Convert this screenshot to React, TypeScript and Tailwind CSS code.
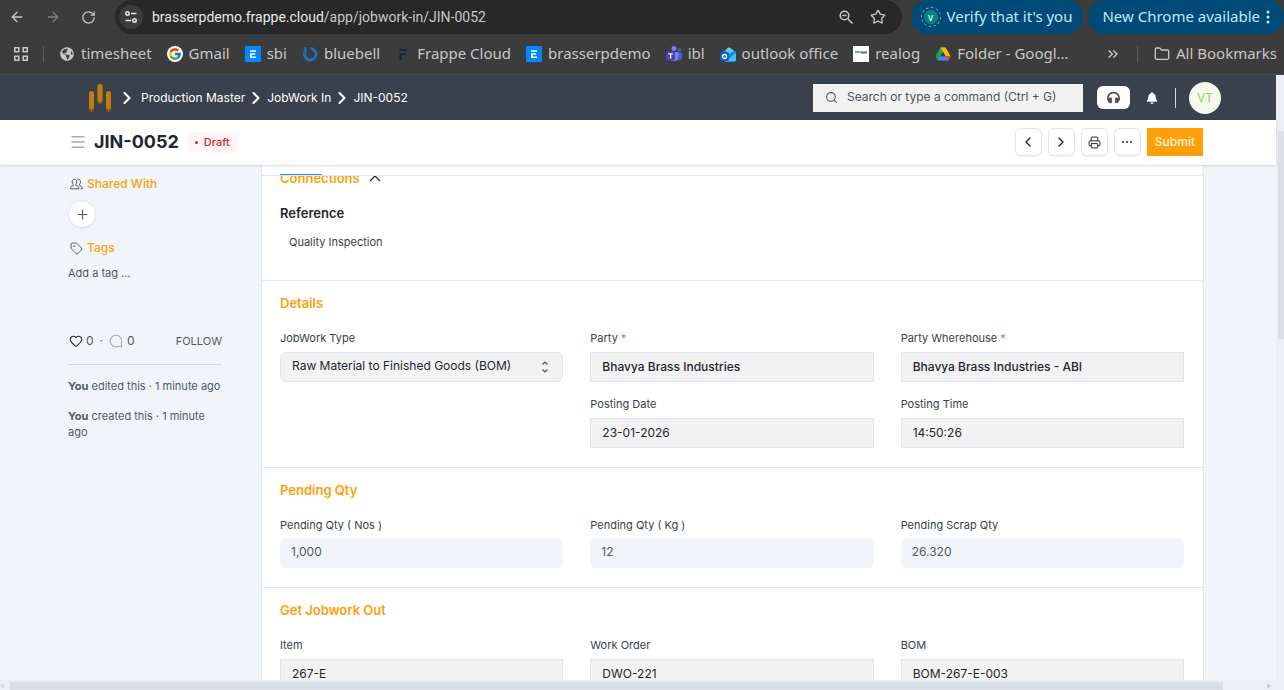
import type { ReactNode } from 'react';
import {
  ArrowLeft,
  ArrowRight,
  ChevronLeft,
  ChevronRight,
  ChevronsRight,
  Folder,
  Heart,
  Menu,
  MessageCircle,
  Plus,
  Printer,
  RotateCw,
  Search,
  Star,
  Tag,
} from 'lucide-react';
import { FcGoogle } from 'react-icons/fc';
import { FaBell, FaGlobeAmericas, FaHeadphones } from 'react-icons/fa';

type FieldItem = { id: string; label: string; value: string; required?: boolean; strong?: boolean };

const PARTY_FIELDS: FieldItem[] = [
  { id: 'party', label: 'Party', value: 'Bhavya Brass Industries', required: true, strong: true },
  { id: 'warehouse', label: 'Party Wherehouse', value: 'Bhavya Brass Industries - ABI', required: true, strong: true },
];

const PENDING_FIELDS: FieldItem[] = [
  { id: 'pending-nos', label: 'Pending Qty ( Nos )', value: '1,000' },
  { id: 'pending-kg', label: 'Pending Qty ( Kg )', value: '12' },
  { id: 'pending-scrap', label: 'Pending Scrap Qty', value: '26.320' },
];

const JOBWORK_FIELDS: FieldItem[] = [
  { id: 'item', label: 'Item', value: '267-E' },
  { id: 'work-order', label: 'Work Order', value: 'DWO-221' },
  { id: 'bom', label: 'BOM', value: 'BOM-267-E-003' },
];

function ErpIcon() {
  return (
    <svg viewBox="0 0 16 16" className="h-4 w-4">
      <rect width="16" height="16" rx="1" fill="#0089ff" />
      <path d="M5 4.2h6v1.6H5zM5 7.2h5.2v1.6H6.8v1.6H11V12H5z" fill="#fff" />
    </svg>
  );
}

function BluebellIcon() {
  return (
    <svg viewBox="0 0 16 16" className="h-4 w-4" fill="none" stroke="#1c6fb8" strokeWidth="3">
      <path d="M8.5 2.4A5.8 5.8 0 1 1 3.4 5" />
      <path d="M3.5 1v5" strokeWidth="2.2" />
    </svg>
  );
}

function FrappeIcon() {
  return (
    <svg viewBox="0 0 16 16" className="h-4 w-4" fill="#17293f">
      <path d="M4.5 3H12v2H4.5zM4.5 7H11v2H7v5H4.5z" />
    </svg>
  );
}

function TeamsIcon() {
  return (
    <svg viewBox="0 0 16 16" className="h-4 w-4">
      <circle cx="8" cy="2.6" r="2.5" fill="#7b83eb" />
      <circle cx="13.4" cy="4" r="1.8" fill="#5059c9" />
      <path d="M10 6.5h6v5a3 3 0 0 1-5 2z" fill="#5059c9" />
      <path d="M4 6h8.5v5.5a4.3 4.3 0 0 1-8.5 0z" fill="#7b83eb" />
      <rect y="5.5" width="9" height="9" rx="1" fill="#4b41b8" />
      <path d="M2.4 7.3h4.4v1.3H5.3v4H3.9v-4H2.4z" fill="#fff" />
    </svg>
  );
}

function OutlookIcon() {
  return (
    <svg viewBox="0 0 16 16" className="h-4 w-4">
      <path d="M2 6 9 1.2 16 6v7.5a2 2 0 0 1-2 2H5z" fill="#1788e5" />
      <path d="M6 3.4 9 1.2 14 5 7 9z" fill="#72c7f5" />
      <path d="M5 15.5 16 7v6.5a2 2 0 0 1-2 2z" fill="#37c4f5" />
      <rect y="6" width="9" height="9" rx="2" fill="#0f5fc9" />
      <circle cx="4.5" cy="10.5" r="2" fill="none" stroke="#fff" strokeWidth="1.3" />
    </svg>
  );
}

function DriveIcon() {
  return (
    <svg viewBox="0 0 16 16" className="h-4 w-4">
      <path d="M5.4 1.5h5.2L5 11.2l-2.4 3.3L.5 10.3z" fill="#1ea362" />
      <path d="M5.4 1.5h5.2l5 8.8h-5z" fill="#ffba00" />
      <path d="M5.2 10.3h10.4L13.2 14.5H2.6z" fill="#4285f4" />
      <path d="M10.6 10.3h5L13.2 14.5z" fill="#ea4335" />
      <path d="M8 6.2 10.4 10.3H5.6z" fill="#3c3c3c" />
    </svg>
  );
}

function RealogIcon() {
  return (
    <svg viewBox="0 0 16 16" className="h-4 w-4">
      <path d="M0 0h16v16H0z" fill="#fff" />
      <path d="M2 5h5v2H2z" fill="#6fa8d6" />
      <path d="M7.5 5.5H14v2H7.5z" fill="#5b6f86" />
    </svg>
  );
}

function TuneIcon() {
  return (
    <svg viewBox="0 0 16 16" className="h-4 w-4" fill="none" stroke="#e3e3e3" strokeWidth="1.6">
      <circle cx="4.5" cy="4.5" r="1.7" />
      <path d="M8 4.5h5.5M2.5 11.5H8" />
      <circle cx="11.5" cy="11.5" r="1.7" />
    </svg>
  );
}

function ZoomOutIcon() {
  return (
    <svg viewBox="0 0 16 16" className="h-4 w-4" fill="none" stroke="currentColor" strokeWidth="1.6">
      <circle cx="6.5" cy="6.5" r="4.3" />
      <path d="m9.8 9.8 4.7 4.7M4.5 6.5h4" />
    </svg>
  );
}

function AppsIcon() {
  return (
    <svg viewBox="0 0 14 14" className="h-[14px] w-[14px]" fill="none" stroke="#c7c7c7" strokeWidth="1.6">
      <path d="M.8.8h4v4h-4zM9.2.8h4v4h-4zM.8 9.2h4v4h-4zM9.2 9.2h4v4h-4z" />
    </svg>
  );
}

function BrandLogo() {
  return (
    <svg viewBox="0 0 24 30" className="h-[30px] w-6" strokeWidth="5" strokeLinecap="round">
      <path d="M3.5 10.5v16M12 3.5v15M20.5 10.5v16" stroke="#8a5208" />
      <path d="M3.5 10.5v13.5M12 3.5v13M20.5 10.5v13.5" stroke="#c27c0e" />
    </svg>
  );
}

function SharedIcon() {
  return (
    <svg viewBox="0 0 13 12" className="h-3 w-[13px]" fill="none" stroke="#505a62" strokeLinejoin="round">
      <path d="M4.5 1.2c1.5 0 2.3 1 2.3 2.5 0 1.2-.5 2-.9 2.5v1.300l2.300 1c.5.3.6 1 .6 2.300H.6c0-1.300.1-2 .6-2.300l2-1V6.200c-.5-.5-1-1.300-1-2.500 0-1.500.8-2.500 2.300-2.500z" />
      <path d="M7.3 1.3C9.2.8 10.5 2 10.5 3.7c0 1.2-.5 2-.9 2.5v1.300l2 1c.6.3.8 1 .8 2.300h-1.800" />
    </svg>
  );
}

const BOOKMARKS: { label: string; icon: ReactNode }[] = [
  { label: 'timesheet', icon: <FaGlobeAmericas className="h-[14px] w-4 text-[#c7c7c7]" /> },
  { label: 'Gmail', icon: <span className="rounded-full bg-white p-px"><FcGoogle className="h-[14px] w-[14px]" /></span> },
  { label: 'sbi', icon: <ErpIcon /> },
  { label: 'bluebell', icon: <BluebellIcon /> },
  { label: 'Frappe Cloud', icon: <FrappeIcon /> },
  { label: 'brasserpdemo', icon: <ErpIcon /> },
  { label: 'ibl', icon: <TeamsIcon /> },
  { label: 'outlook office', icon: <OutlookIcon /> },
  { label: 'realog', icon: <RealogIcon /> },
  { label: 'Folder - Googl…', icon: <DriveIcon /> },
];

function BrowserBar() {
  return (
    <header className="shrink-0 border-b border-[#4a4a4a] bg-[#3c3c3c] font-['Noto_Sans',sans-serif] text-[15px] text-[#c7c7c7]">
      <div className="flex h-[34px] items-center">
        <div className="flex w-[115px] shrink-0 items-center gap-5 pl-[9px]">
          <button aria-label="Back"><ArrowLeft className="h-4 w-4" /></button>
          <button aria-label="Forward" className="text-[#7d7d7d]"><ArrowRight className="h-4 w-4" /></button>
          <button aria-label="Reload"><RotateCw className="h-[15px] w-[15px]" /></button>
        </div>
        <div className="flex h-[34px] min-w-0 flex-1 items-center rounded-full bg-[#282828] pl-1 pr-4">
          <button aria-label="Site information" className="grid h-6 w-6 shrink-0 place-items-center rounded-full bg-[#3c3c3c]"><TuneIcon /></button>
          <p className="ml-[9px] min-w-0 flex-1 truncate font-['Roboto',sans-serif] text-sm"><span className="text-[#e8e8e8]">brasserpdemo.frappe.cloud</span>/app/jobwork-in/JIN-0052</p>
          <button aria-label="Zoom" className="mr-4"><ZoomOutIcon /></button>
          <button aria-label="Bookmark this tab"><Star className="h-4 w-4" /></button>
        </div>
        <button className="ml-[9px] flex h-[34px] shrink-0 items-center gap-[6px] rounded-full bg-[#004a77] pb-px pl-[10px] pr-[11px] text-[#c2e7ff]">
          <span className="grid h-5 w-5 place-items-center rounded-full border border-dashed border-[#8aa9bd]">
            <span className="grid h-[14px] w-[14px] place-items-center rounded-full bg-[#00897b] text-[10px] leading-none text-white">v</span>
          </span>
          Verify that it's you
        </button>
        <button className="ml-[5px] flex h-[34px] shrink-0 items-center gap-[6px] rounded-full bg-[#004a77] pb-px pl-[14px] pr-[14px] text-[#c2e7ff]">
          New Chrome available
          <svg viewBox="0 0 4 16" className="h-4 w-1" fill="currentColor">
            <circle cx="2" cy="3" r="1.5" /><circle cx="2" cy="8" r="1.5" /><circle cx="2" cy="13" r="1.5" />
          </svg>
        </button>
      </div>
      <nav className="flex h-10 items-center whitespace-nowrap pb-px pl-[14px] pr-[7px]">
        <button aria-label="Apps"><AppsIcon /></button>
        <span className="mx-[15px] h-4 w-px bg-[#5c5c5c]" />
        <div className="flex min-w-0 items-center gap-[15px] overflow-hidden">
          {BOOKMARKS.map((item) => (
            <a key={item.label} href="#" className="flex shrink-0 items-center gap-[6px]">{item.icon}{item.label}</a>
          ))}
        </div>
        <button aria-label="More bookmarks" className="ml-auto"><ChevronsRight className="h-4 w-4" /></button>
        <span className="mx-4 h-4 w-px bg-[#5c5c5c]" />
        <button className="flex items-center gap-[6px]"><Folder className="h-4 w-4" />All Bookmarks</button>
      </nav>
    </header>
  );
}

function Navbar() {
  return (
    <div className="flex h-[45px] shrink-0 items-center bg-[#38414c] pl-[88px] pr-[55px] text-white">
      <a href="#" aria-label="Home"><BrandLogo /></a>
      <nav className="flex items-center text-xs">
        <ChevronRight className="ml-[5px] mr-1 h-5 w-5" strokeWidth={2.5} />
        <a href="#">Production Master</a>
        <ChevronRight className="mx-px h-5 w-5" strokeWidth={2.5} />
        <a href="#">JobWork In</a>
        <ChevronRight className="mx-px h-5 w-5" strokeWidth={2.5} />
        <a href="#">JIN-0052</a>
      </nav>
      <label className="ml-auto flex h-7 w-[270px] items-center gap-[9px] bg-[#f2f2f2] pl-3 text-[#4c5561]">
        <Search className="h-[13px] w-[13px]" />
        <input aria-label="Search" placeholder="Search or type a command (Ctrl + G)" className="min-w-0 flex-1 pb-[2px] text-xs outline-none placeholder:text-[#4c5561]" />
      </label>
      <button aria-label="Support" className="ml-[14px] grid h-[23px] w-[33px] place-items-center rounded-md bg-white text-[#505050]"><FaHeadphones className="h-[13px] w-[13px]" /></button>
      <button aria-label="Notifications" className="ml-4"><FaBell className="h-3 w-3" /></button>
      <span className="ml-[17px] h-5 w-px bg-[#d3d8de]" />
      <button className="ml-[13px] grid h-8 w-8 place-items-center rounded-full bg-[#f4faee] text-xs text-[#93d65c]">VT</button>
    </div>
  );
}

function ToolButton({ label, children }: { label: string; children: ReactNode }) {
  return (
    <button aria-label={label} className="grid h-7 w-[27px] place-items-center rounded-md border border-[#e2e4e8] bg-white shadow-xs">{children}</button>
  );
}

function PageHead() {
  return (
    <div className="z-10 flex h-[45px] shrink-0 items-center bg-white pb-px pl-[69px] pr-[73px] text-[#1f272e] shadow-sm">
      <button aria-label="Toggle sidebar" className="text-[#a3abb5]"><Menu className="h-[18px] w-[18px]" /></button>
      <h1 className="ml-[7px] text-lg font-bold">JIN-0052</h1>
      <span className="ml-2 flex h-[21px] items-center gap-[6px] rounded-md bg-[#fff5f5] px-2 text-[11px] font-medium text-[#cb2929]">
        <span className="h-[3px] w-[3px] rounded-full bg-current" />
        Draft
      </span>
      <div className="ml-auto flex items-center gap-[6px]">
        <ToolButton label="Previous"><ChevronLeft className="h-4 w-4" /></ToolButton>
        <ToolButton label="Next"><ChevronRight className="h-4 w-4" /></ToolButton>
        <ToolButton label="Print"><Printer className="h-[13px] w-[13px]" strokeWidth={1.8} /></ToolButton>
        <ToolButton label="Menu">
          <svg viewBox="0 0 12 4" className="h-1 w-3" fill="currentColor">
            <circle cx="2" cy="2" r="1" /><circle cx="6" cy="2" r="1" /><circle cx="10" cy="2" r="1" />
          </svg>
        </ToolButton>
        <button className="h-7 bg-[#ffa00a] px-2 text-xs font-medium text-[#fff3dc]">Submit</button>
      </div>
    </div>
  );
}

function Sidebar() {
  return (
    <aside className="mr-[39px] w-[154px] shrink-0 pt-[11px] text-[11px] leading-4 text-[#505a62]">
      <h2 className="flex items-center gap-1 pl-[2px] text-xs leading-4 font-medium text-[#ffa00a]">
        <SharedIcon />Shared With
      </h2>
      <button aria-label="Share" className="mt-2 grid h-7 w-7 place-items-center rounded-full border border-[#e2e6e9] bg-white shadow-xs"><Plus className="h-[15px] w-[15px]" strokeWidth={1.8} /></button>
      <h2 className="mt-3 flex items-center gap-1 pl-[2px] text-xs leading-4 font-medium text-[#ffa00a]">
        <Tag className="h-[13px] w-[13px] text-[#505a62]" strokeWidth={1.8} />Tags
      </h2>
      <button className="mt-[9px] block">Add a tag ...</button>
      <div className="mt-[52px] flex items-center pl-px text-xs leading-4">
        <button className="flex items-center gap-[3px]"><Heart className="h-[14px] w-[14px] text-[#1f272e]" strokeWidth={1.8} />0</button>
        <span className="mx-[6px]">·</span>
        <button className="flex items-center gap-1"><MessageCircle className="h-[14px] w-[14px] -scale-x-100 text-[#a3abb5]" strokeWidth={1.8} />0</button>
        <button className="ml-auto text-[11px]">FOLLOW</button>
      </div>
      <p className="mt-[15px] border-t border-[#d3d9e0] pt-[13px]"><b>You</b> edited this · 1 minute ago</p>
      <p className="mt-[14px]"><b>You</b> created this · 1 minute ago</p>
    </aside>
  );
}

function Field({ field }: { field: FieldItem }) {
  return (
    <div>
      <label htmlFor={field.id} className="block text-[11px] leading-4">
        {field.label}{field.required && <span className="text-[#ff5858]"> *</span>}
      </label>
      <input
        id={field.id}
        defaultValue={field.value}
        className={`mt-[6px] block h-[30px] w-full border border-[#e2e6f0] bg-[#f2f2f2] px-[11px] pb-[2px] text-xs text-[#1f272e] outline-none ${field.strong ? 'font-medium' : ''}`}
      />
    </div>
  );
}

function ReadOnlyField({ field }: { field: FieldItem }) {
  return (
    <div>
      <label htmlFor={field.id} className="block text-[11px] leading-4">{field.label}</label>
      <input id={field.id} value={field.value} readOnly className="mt-[5px] block h-[30px] w-full rounded-md bg-[#f1f5fa] px-[11px] pb-[3px] text-xs text-[#505a62] outline-none" />
    </div>
  );
}

function Section({ title, children }: { title: string; children: ReactNode }) {
  return (
    <section className="border-t border-[#e2e6f0] pl-[18px] pr-[19px] pt-[14px] pb-[19px]">
      <h2 className="mb-[19px] text-[13px] font-semibold leading-4 text-[#ffa00a]">{title}</h2>
      <div className="grid grid-cols-3 gap-x-[27px] gap-y-[14px]">{children}</div>
    </section>
  );
}

function JobWorkForm() {
  return (
    <main className="min-w-0 flex-1 border-x border-[#e2e6f0] bg-white text-[#38414c]">
      <div className="flex h-[11px] items-end border-b border-[#e2e6f0] pl-[18px]"><span className="h-px w-[42px] bg-[#2490ef]" /></div>
      <section className="h-[104px] pl-[18px]">
        <button className="flex h-[10px] items-end gap-[9px] overflow-hidden text-[13px] font-semibold leading-4 text-[#ffa00a]">
          Connections
          <svg viewBox="0 0 12 16" className="h-4 w-3" fill="none" stroke="#1f272e" strokeWidth="1.2">
            <path d="m1 11 5-5 5 5" />
          </svg>
        </button>
        <h3 className="mt-[19px] text-[13px] font-semibold leading-4 text-[#1f272e]">Reference</h3>
        <a href="#" className="ml-[9px] mt-[13px] inline-block text-[11px] leading-4">Quality Inspection</a>
      </section>
      <Section title="Details">
        <div>
          <label htmlFor="jobwork-type" className="block text-[11px] leading-4">JobWork Type</label>
          <div className="relative mt-[6px]">
            <select id="jobwork-type" className="block h-[30px] w-full appearance-none rounded-md border border-[#e2e6f0] bg-[#f2f2f2] px-[11px] pb-[2px] text-xs text-[#1f272e] outline-none">
              <option>Raw Material to Finished Goods (BOM)</option>
            </select>
            <svg viewBox="0 0 8 12" className="pointer-events-none absolute right-[14px] top-[9px] h-3 w-2" fill="none" stroke="#4c5561" strokeWidth="1.2">
              <path d="m1.5 3.5 2.5-2.5 2.5 2.5M1.5 8.5 4 11l2.5-2.5" />
            </svg>
          </div>
        </div>
        {PARTY_FIELDS.map((field) => <Field key={field.id} field={field} />)}
        <div className="col-start-2"><Field field={{ id: 'posting-date', label: 'Posting Date', value: '23-01-2026' }} /></div>
        <Field field={{ id: 'posting-time', label: 'Posting Time', value: '14:50:26' }} />
      </Section>
      <Section title="Pending Qty">
        {PENDING_FIELDS.map((field) => <ReadOnlyField key={field.id} field={field} />)}
      </Section>
      <Section title="Get Jobwork Out">
        {JOBWORK_FIELDS.map((field) => <Field key={field.id} field={field} />)}
      </Section>
    </main>
  );
}

export default function App() {
  return (
    <div className="flex h-screen flex-col overflow-hidden bg-[#f1f5fa] font-['Inter',sans-serif]">
      <BrowserBar />
      <div className="flex min-h-0 flex-1">
        <div className="flex min-w-0 flex-1 flex-col">
          <Navbar />
          <PageHead />
          <div className="flex min-h-0 flex-1 overflow-hidden pl-[68px] pr-[72px]">
            <Sidebar />
            <JobWorkForm />
          </div>
        </div>
        <div className="flex w-2 shrink-0 flex-col items-end bg-[#ebeff5] pt-[56px]">
          <div className="h-[208px] w-[6px] bg-[#d8dfe6]" />
        </div>
      </div>
      <div className="flex h-[10px] shrink-0 items-end justify-between bg-[#ebeff5] pr-[13px]">
        <svg viewBox="0 0 4 8" className="h-2 w-1" fill="#d0d7df"><path d="M4 1v6L0 4z" /></svg>
        <div className="ml-[6px] mr-[44px] h-2 flex-1 bg-[#d8dfe6]" />
        <svg viewBox="0 0 4 8" className="h-2 w-1" fill="#c8d0d9"><path d="M0 1v6l4-3z" /></svg>
      </div>
    </div>
  );
}
